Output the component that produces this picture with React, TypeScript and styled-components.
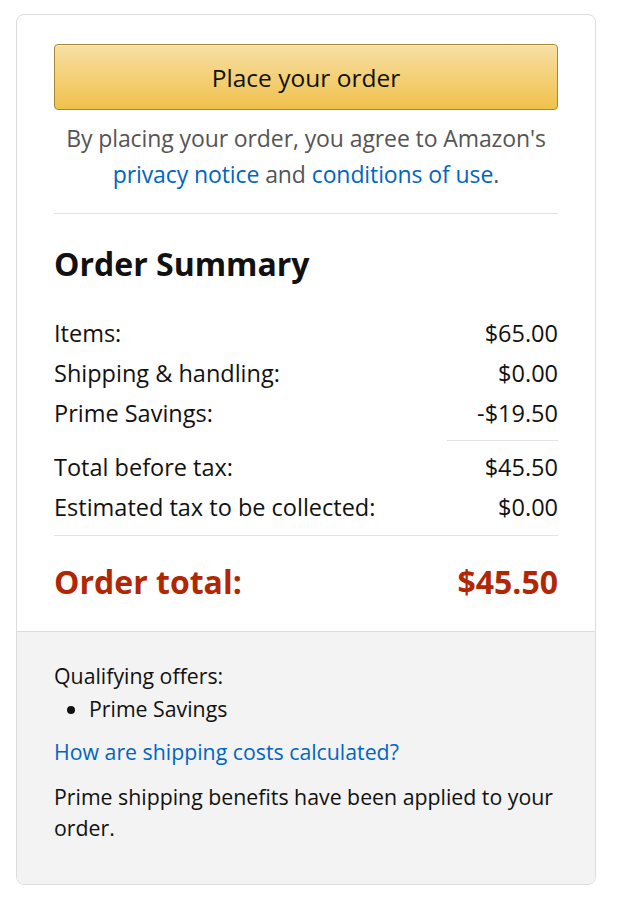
import styled, { createGlobalStyle } from "styled-components";

const GlobalStyle = createGlobalStyle`
  body {
    margin: 0;
    background: #ffffff;
    font-family: "Open Sans", "Liberation Sans", Arial, sans-serif;
    color: #111111;
  }
`;

const summaryRows = [
  { label: "Items:", value: "$65.00" },
  { label: "Shipping & handling:", value: "$0.00" },
  { label: "Prime Savings:", value: "-$19.50" },
];

const taxRows = [
  { label: "Total before tax:", value: "$45.50" },
  { label: "Estimated tax to be collected:", value: "$0.00" },
];

const Page = styled.div`
  padding: 14px 28px 36px 16px;
`;

const Card = styled.div`
  border: 1px solid #dddddd;
  border-radius: 8px;
  overflow: hidden;
  background: #ffffff;
`;

const TopSection = styled.div`
  padding: 29px 37px 0 37px;
`;

const OrderButton = styled.button`
  display: block;
  width: 100%;
  height: 66px;
  border: 1px solid #a88734;
  border-radius: 4px;
  background: linear-gradient(to bottom, #f7dfa5, #f0c14b);
  box-shadow: inset 0 1px 0 rgba(255, 255, 255, 0.4);
  font-family: inherit;
  font-size: 24.5px;
  color: #111111;
  cursor: pointer;
`;

const Agreement = styled.p`
  margin: 10px 0 0;
  text-align: center;
  font-size: 23px;
  line-height: 36px;
  color: #555555;
  letter-spacing: -0.1px;
`;

const Link = styled.a`
  color: #0066c0;
  text-decoration: none;
`;

const Divider = styled.hr<{ $short?: boolean; $gap: string }>`
  border: none;
  border-top: 1px solid #e3e3e3;
  margin: ${(p) => p.$gap};
  width: ${(p) => (p.$short ? "111px" : "auto")};
  margin-left: ${(p) => (p.$short ? "auto" : "0")};
`;

const Heading = styled.h2`
  margin: 32px 0 31px;
  font-size: 32px;
  line-height: 36px;
  font-weight: 700;
`;

const Row = styled.div`
  display: flex;
  justify-content: space-between;
  font-size: 23.5px;
  line-height: 40px;
`;

const TotalRow = styled(Row)`
  font-size: 32px;
  font-weight: 700;
  color: #b12704;
  margin-top: 26px;
  padding-bottom: 29px;
`;

const InfoSection = styled.div`
  background: #f3f3f3;
  border-top: 1px solid #dddddd;
  padding: 27px 37px 41px;
  font-size: 21.3px;
`;

const InfoText = styled.div`
  line-height: 33px;
`;

const OfferList = styled.ul`
  margin: 0;
  padding-left: 35px;
  line-height: 33px;
`;

const InfoLink = styled(Link)`
  display: block;
  margin-top: 10px;
  line-height: 33px;
`;

const Note = styled.p`
  margin: 13px 0 0;
  line-height: 31px;
`;

export default function App() {
  return (
    <Page>
      <GlobalStyle />
      <Card>
        <TopSection>
          <OrderButton>Place your order</OrderButton>
          <Agreement>
            By placing your order, you agree to Amazon's{" "}
            <Link href="#">privacy notice</Link> and{" "}
            <Link href="#">conditions of use</Link>.
          </Agreement>
          <Divider $gap="21px 0 0" />
          <Heading>Order Summary</Heading>
          {summaryRows.map((row) => (
            <Row key={row.label}>
              <span>{row.label}</span>
              <span>{row.value}</span>
            </Row>
          ))}
          <Divider $short $gap="7px 0 6px" />
          {taxRows.map((row) => (
            <Row key={row.label}>
              <span>{row.label}</span>
              <span>{row.value}</span>
            </Row>
          ))}
          <Divider $gap="8px 0 0" />
          <TotalRow>
            <span>Order total:</span>
            <span>$45.50</span>
          </TotalRow>
        </TopSection>
        <InfoSection>
          <InfoText>Qualifying offers:</InfoText>
          <OfferList>
            <li>Prime Savings</li>
          </OfferList>
          <InfoLink href="#">How are shipping costs calculated?</InfoLink>
          <Note>Prime shipping benefits have been applied to your order.</Note>
        </InfoSection>
      </Card>
    </Page>
  );
}
